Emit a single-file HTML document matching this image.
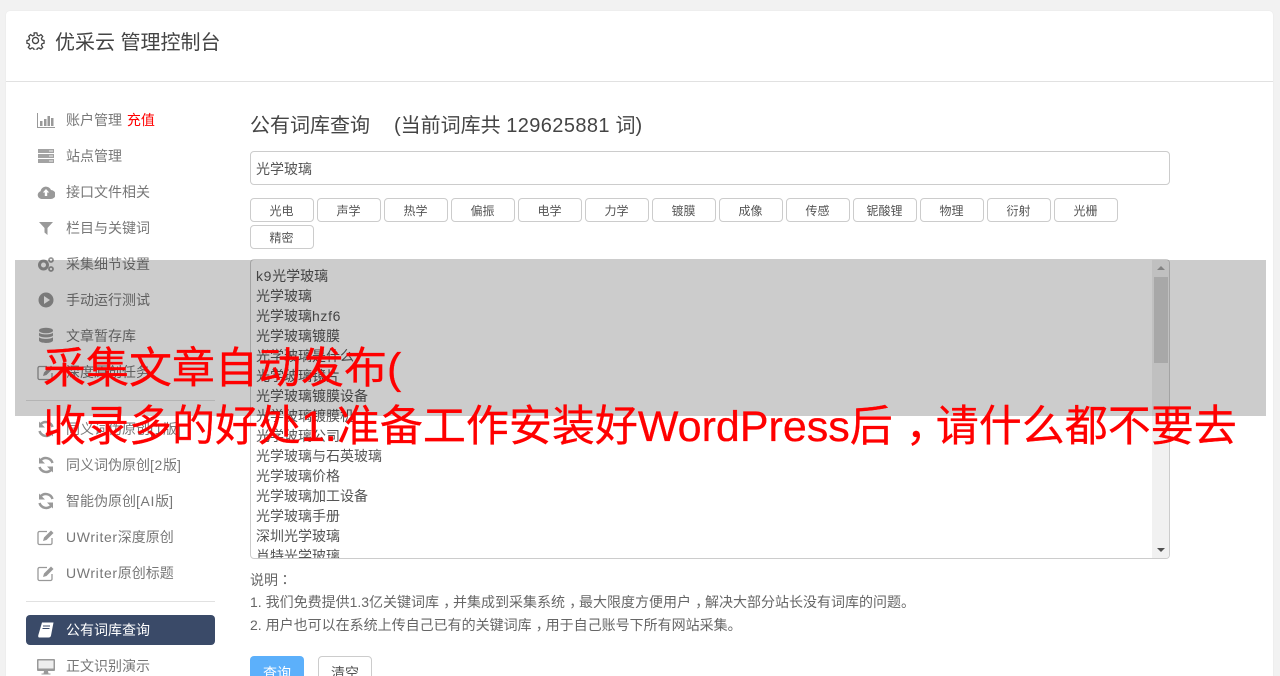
<!DOCTYPE html>
<html lang="zh-CN"><head><meta charset="utf-8"><title>优采云 管理控制台</title>
<style>
*{box-sizing:border-box}
html,body{margin:0;padding:0;width:1280px;height:676px;overflow:hidden;background:#f2f2f2}
#wrap{position:relative;width:1280px;height:676px;overflow:hidden;background:#f2f2f2;font-family:"Liberation Sans","Noto Sans CJK SC",sans-serif;color:#676a6c}
.a{position:absolute;white-space:nowrap}
.l{letter-spacing:.65px}
.tc{font-family:"Noto Sans CJK TC",sans-serif;line-height:0}
.cm{position:relative;left:.3em}
#card{position:absolute;left:6px;top:11px;width:1267px;height:665px;background:#fff;border-radius:4px 4px 0 0;box-shadow:0 0 1px #ddd}
.hl{position:absolute;height:1px;background:#e1e1e1}
.m{position:absolute;left:66px;font-size:14px;line-height:20px;color:#777;white-space:nowrap}
.ic{position:absolute;left:37px;width:18px;height:18px}
.c{position:absolute;width:64px;height:24px;border:1px solid #ccc;border-radius:4px;font-size:12px;line-height:25px;text-align:center;color:#555;background:#fff;padding-right:1px}
#list{position:absolute;left:250px;top:259px;width:920px;height:300px;border:1px solid #ccc;border-radius:4px;overflow:hidden;background:#fff}
#list div{position:absolute;left:5px;font-size:14px;line-height:20px;color:#555;white-space:nowrap}
#ov{position:absolute;left:15px;top:260px;width:1251px;height:156px;background:rgba(0,0,0,.2)}
#t{position:absolute;left:43px;top:340px;width:1220px;font-size:43px;line-height:58px;color:#f00;white-space:nowrap;-webkit-text-stroke:.3px #f00}
</style></head><body>
<div id="wrap">
<div id="card"></div>
<svg class="a" style="left:26px;top:31px" width="19" height="19" viewBox="0 0 20 20" fill="none" stroke="#444" stroke-width="1.4"><circle cx="10" cy="10" r="3.2"/><path d="M8.5 1.5h3l.5 2.6 1.8.8 2.2-1.5 2 2.1-1.5 2.2.8 1.8 2.2.5v3l-2.2.5-.8 1.8 1.5 2.2-2 2-2.2-1.4-1.8.7-.5 2.1h-3l-.5-2.1-1.800-.7-2.2 1.4-2-2 1.5-2.2-.8-1.8-2.2-.5v-3l2.2-.5.8-1.8L2.5 5.500l2-2.1 2.2 1.5 1.8-.8z" transform="translate(.5 .5) scale(.95)"/></svg>
<div class="a" style="left:55px;top:29px;font-size:20px;line-height:28px;color:#444">优采云 管理控制台</div>
<div class="hl" style="left:6px;top:81px;width:1267px"></div>

<svg class="ic" style="top:111px" viewBox="0 0 18 18"><path d="M.5 2v14.500H18" fill="none" stroke="#999" stroke-width="1"/><path d="M3 10h2.500v5H3zM7 8h2.500v7H7zM10.500 5h2.500v10h-2.500zM14 7h2.500v8H14z" fill="#999"/></svg>
<div class="m" style="top:110px">账户管理 <span style="color:#f00;margin-left:1px">充值</span></div>
<svg class="ic" style="top:147px" viewBox="0 0 18 18" fill="#a3a3a3"><path d="M1 2h16v4H1zM1 7h16v4H1zM1 12h16v4H1z"/><path d="M12 3.500h4v1h-4zM12 8.500h4v1h-4zM12 13.500h4v1h-4z" fill="#eee"/></svg>
<div class="m" style="top:146px">站点管理</div>
<svg class="ic" style="top:183px" viewBox="0 0 18 18"><path d="M4.500 16A4 4 0 0 1 3.500 8.200 5.500 5.500 0 0 1 14 7a4.500 4.500 0 0 1 0 9z" fill="#999"/><path d="M9 6l3.200 3.500h-2V13H7.800V9.500h-2z" fill="#fff"/></svg>
<div class="m" style="top:182px">接口文件相关</div>
<svg class="ic" style="top:219px" viewBox="0 0 18 18"><path d="M2 3h14l-5.500 6v7L7.500 13.500V9z" fill="#999"/></svg>
<div class="m" style="top:218px">栏目与关键词</div>
<svg class="ic" style="top:255px" viewBox="0 0 18 18"><circle cx="6.500" cy="10" r="4" fill="none" stroke="#999" stroke-width="3"/><circle cx="14" cy="5" r="2" fill="none" stroke="#999" stroke-width="1.800"/><circle cx="14" cy="14" r="2" fill="none" stroke="#999" stroke-width="1.800"/></svg>
<div class="m" style="top:254px">采集细节设置</div>
<svg class="ic" style="top:291px" viewBox="0 0 18 18"><circle cx="9" cy="9" r="7.500" fill="#999"/><path d="M7 5l6 4-6 4z" fill="#fff"/></svg>
<div class="m" style="top:290px">手动运行测试</div>
<svg class="ic" style="top:327px" viewBox="0 0 18 18" fill="#999"><ellipse cx="9" cy="3.500" rx="7" ry="2.800"/><path d="M2 5.500c1 2.500 13 2.500 14 0v3c-1 2.500-13 2.500-14 0zM2 10c1 2.500 13 2.500 14 0v3.500c-1 3.300-13 3.300-14 0z"/></svg>
<div class="m" style="top:326px">文章暂存库</div>
<svg class="ic" style="top:363px" viewBox="0 0 18 18"><path d="M15 10v5a1.500 1.500 0 0 1-1.500 1.500h-11A1.500 1.500 0 0 1 1 15V5a1.500 1.500 0 0 1 1.500-1.500H10" fill="none" stroke="#999" stroke-width="1.300"/><path d="M6 13l1-3.500L14 2.500l2.500 2.500-7 7z" fill="#999"/></svg>
<div class="m" style="top:362px">深度原创任务</div>
<div class="hl" style="left:26px;top:400px;width:189px"></div>
<svg class="ic" style="top:420px" viewBox="0 0 18 18"><path d="M15.500 7A7 7 0 0 0 3.500 4.500M2.500 11a7 7 0 0 0 12 2.500" fill="none" stroke="#999" stroke-width="2.500"/><path d="M2 1.500v6h6zM16 16.500v-6h-6z" fill="#999"/></svg>
<div class="m" style="top:419px">同义词伪原创<span class="l">[1</span>版<span class="l">]</span></div>
<svg class="ic" style="top:456px" viewBox="0 0 18 18"><path d="M15.500 7A7 7 0 0 0 3.500 4.500M2.500 11a7 7 0 0 0 12 2.500" fill="none" stroke="#999" stroke-width="2.500"/><path d="M2 1.500v6h6zM16 16.500v-6h-6z" fill="#999"/></svg>
<div class="m" style="top:455px">同义词伪原创<span class="l">[2</span>版<span class="l">]</span></div>
<svg class="ic" style="top:492px" viewBox="0 0 18 18"><path d="M15.500 7A7 7 0 0 0 3.500 4.500M2.500 11a7 7 0 0 0 12 2.500" fill="none" stroke="#999" stroke-width="2.500"/><path d="M2 1.500v6h6zM16 16.500v-6h-6z" fill="#999"/></svg>
<div class="m" style="top:491px">智能伪原创<span class="l">[AI</span>版<span class="l">]</span></div>
<svg class="ic" style="top:528px" viewBox="0 0 18 18"><path d="M15 10v5a1.500 1.500 0 0 1-1.500 1.500h-11A1.500 1.500 0 0 1 1 15V5a1.500 1.500 0 0 1 1.500-1.500H10" fill="none" stroke="#999" stroke-width="1.300"/><path d="M6 13l1-3.500L14 2.500l2.500 2.500-7 7z" fill="#999"/></svg>
<div class="m" style="top:527px"><span class="l">UWriter</span>深度原创</div>
<svg class="ic" style="top:564px" viewBox="0 0 18 18"><path d="M15 10v5a1.500 1.500 0 0 1-1.500 1.500h-11A1.500 1.500 0 0 1 1 15V5a1.500 1.500 0 0 1 1.500-1.500H10" fill="none" stroke="#999" stroke-width="1.300"/><path d="M6 13l1-3.500L14 2.500l2.500 2.500-7 7z" fill="#999"/></svg>
<div class="m" style="top:563px"><span class="l">UWriter</span>原创标题</div>
<div class="hl" style="left:26px;top:601px;width:189px"></div>
<div class="a" style="left:26px;top:615px;width:189px;height:30px;background:#3a4a68;border-radius:4px"></div>
<svg class="ic" style="top:621px" viewBox="0 0 18 18"><path d="M5 1.500h11.500L14 14.500c-.3 1.200-1 2-2.500 2H2.500c-1.500 0-1.500-1.500-1-3z" fill="#fff"/><path d="M6 5h7M5.500 7.500h7" stroke="#3a4a68" stroke-width="1"/></svg>
<div class="m" style="top:620px;color:#fff">公有词库查询</div>
<svg class="ic" style="top:657px" viewBox="0 0 18 18"><path d="M1 2h16a1 1 0 0 1 1 1v10a1 1 0 0 1-1 1H1a1 1 0 0 1-1-1V3a1 1 0 0 1 1-1z" fill="#999"/><path d="M1.500 3.500h15v8h-15z" fill="#eee"/><path d="M7 14h4l.5 2.500h2v1h-9v-1h2z" fill="#999"/></svg>
<div class="m" style="top:656px">正文识别演示</div>

<div class="a" style="left:250px;top:111px;font-size:20px;line-height:30px;color:#444">公有词库查询</div>
<div class="a" style="left:394px;top:111px;font-size:20px;line-height:30px;color:#444">(当前词库共 <span style="letter-spacing:.4px">129625881</span> 词)</div>
<div class="a" style="left:250px;top:151px;width:920px;height:34px;border:1px solid #ccc;border-radius:4px;padding-left:5px;font-size:14px;line-height:34px;color:#555">光学玻璃</div>

<div class="c" style="left:250px;top:198px">光电</div><div class="c" style="left:317px;top:198px">声学</div><div class="c" style="left:384px;top:198px">热学</div><div class="c" style="left:451px;top:198px">偏振</div><div class="c" style="left:518px;top:198px">电学</div><div class="c" style="left:585px;top:198px">力学</div><div class="c" style="left:652px;top:198px">镀膜</div><div class="c" style="left:719px;top:198px">成像</div><div class="c" style="left:786px;top:198px">传感</div><div class="c" style="left:853px;top:198px">铌酸锂</div><div class="c" style="left:920px;top:198px">物理</div><div class="c" style="left:987px;top:198px">衍射</div><div class="c" style="left:1054px;top:198px">光栅</div><div class="c" style="left:250px;top:225px">精密</div>

<div id="list">
<div style="top:6px"><span class="l">k9</span>光学玻璃</div><div style="top:26px">光学玻璃</div><div style="top:46px">光学玻璃<span class="l">hzf6</span></div><div style="top:66px">光学玻璃镀膜</div><div style="top:86px">光学玻璃是什么</div><div style="top:106px">光学玻璃镜片</div><div style="top:126px">光学玻璃镀膜设备</div><div style="top:146px">光学玻璃镀膜机</div><div style="top:166px">光学玻璃公司</div><div style="top:186px">光学玻璃与石英玻璃</div><div style="top:206px">光学玻璃价格</div><div style="top:226px">光学玻璃加工设备</div><div style="top:246px">光学玻璃手册</div><div style="top:266px">深圳光学玻璃</div><div style="top:286px">肖特光学玻璃</div>
<span style="position:absolute;right:0;top:0;width:17px;height:298px;background:#f1f1f1"></span>
<span style="position:absolute;right:1px;top:17px;width:14px;height:86px;background:#d3d3d3"></span>
<span style="position:absolute;right:4px;top:6px;width:0;height:0;border:4px solid transparent;border-top:0;border-bottom:4px solid #a3a3a3"></span>
<span style="position:absolute;right:4px;bottom:6px;width:0;height:0;border:4px solid transparent;border-bottom:0;border-top:4px solid #505050"></span>
</div>

<div class="a" style="left:250px;top:570px;font-size:14px;line-height:20px;color:#666">说明<span class="tc" lang="zh-TW">：</span></div>
<div class="a" style="left:250px;top:592px;font-size:14px;line-height:20px;color:#666">1. 我们免费提供1.3亿关键词库<span class="cm">，</span>并集成到采集系统<span class="cm">，</span>最大限度方便用户<span class="cm">，</span>解决大部分站长没有词库的问题。</div>
<div class="a" style="left:250px;top:615px;font-size:14px;line-height:20px;color:#666">2. 用户也可以在系统上传自己已有的关键词库<span class="cm">，</span>用于自己账号下所有网站采集。</div>
<div class="a" style="left:250px;top:656px;width:54px;height:34px;background:#5cb0fb;border-radius:4px;color:#fff;font-size:14px;line-height:34px;text-align:center">查询</div>
<div class="a" style="left:318px;top:656px;width:54px;height:34px;background:#fff;border:1px solid #ccc;border-radius:4px;color:#555;font-size:14px;line-height:32px;text-align:center">清空</div>

<div id="ov"></div>
<div id="t">采集文章自动发布(<br>收录多的好处1.准备工作安装好WordPress后<span class="cm">，</span>请什么都不要去</div>
</div>
</body></html>
